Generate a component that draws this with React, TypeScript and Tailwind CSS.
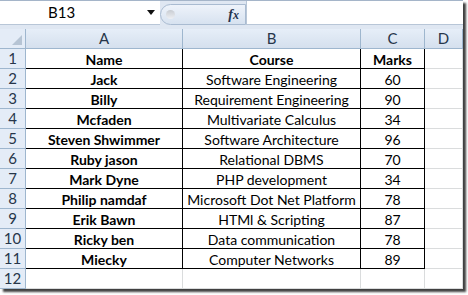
const rows = [
  { name: "Name", course: "Course", marks: "Marks", head: true },
  { name: "Jack", course: "Software Engineering", marks: "60" },
  { name: "Billy", course: "Requirement Engineering", marks: "90" },
  { name: "Mcfaden", course: "Multivariate Calculus", marks: "34" },
  { name: "Steven Shwimmer", course: "Software Architecture", marks: "96" },
  { name: "Ruby jason", course: "Relational DBMS", marks: "70" },
  { name: "Mark Dyne", course: "PHP development", marks: "34" },
  { name: "Philip namdaf", course: "Microsoft Dot Net Platform", marks: "78" },
  { name: "Erik Bawn", course: "HTMl & Scripting", marks: "87" },
  { name: "Ricky ben", course: "Data communication", marks: "78" },
  { name: "Miecky", course: "Computer Networks", marks: "89" },
]

const cols = ["A", "B", "C", "D"]

const FormulaBar = () => (
  <div className="flex h-[29px] bg-[#dfe7f2] border-t border-[#a5b5c9]">
    <div className="flex h-[24px] w-[160px] items-center bg-white border-b border-[#b8c6d7]">
      <span className="flex-1 pl-[48px] text-[15px] text-black">B13</span>
      <svg width="8" height="5" viewBox="0 0 8 5" className="mr-[5px]">
        <path d="M0 0 L8 0 L4 5 Z" fill="#111" />
      </svg>
    </div>
    <div className="mt-[3px] flex h-[21px] w-[86px] items-center rounded-l-full border border-[#a9bbd1] bg-gradient-to-b from-[#eef3fa] to-[#d7e2f0]">
      <span className="ml-[5px] h-[9px] w-[9px] rounded-full bg-gradient-to-b from-[#c8ccd2] to-[#eef0f4]" />
      <span className="ml-auto mr-[6px] font-['Liberation_Serif'] text-[14px] font-bold italic text-[#24344f]">
        f<span className="text-[12px]">x</span>
      </span>
    </div>
    <div className="h-[24px] flex-1 bg-white border-b border-l border-[#b8c6d7]" />
  </div>
)

const HeaderRow = () => (
  <>
    <div className="relative border-r border-b border-[#9eb6ce] bg-[#e4ecf7]">
      <svg width="10" height="10" viewBox="0 0 10 10" className="absolute right-[3px] bottom-[3px]">
        <path d="M10 0 L10 10 L0 10 Z" fill="#b6c4d4" />
      </svg>
    </div>
    {cols.map((c) => (
      <div
        key={c}
        className="flex items-center justify-center border-r border-b border-[#9eb6ce] bg-gradient-to-b from-[#e6eef8] to-[#d5e0ee] text-[15px] text-[#27364a]"
      >
        {c}
      </div>
    ))}
  </>
)

const RowHead = ({ n }: { n: number }) => (
  <div className="flex items-center justify-center border-r border-b border-[#9eb6ce] bg-[#e4ecf7] text-[15px] text-[#27364a]">
    {n}
  </div>
)

export default function App() {
  return (
    <div className="h-[295px] w-[468px] bg-white font-['Lato',sans-serif]">
      <div className="h-[289px] w-[463px] overflow-hidden bg-white shadow-[3px_3px_2px_rgba(0,0,0,0.75)]">
        <FormulaBar />
        <div className="grid grid-cols-[26px_157px_178px_64px_38px] grid-rows-[repeat(13,20px)]">
          <HeaderRow />
          {rows.map((r, i) => (
            <div key={i} className="contents">
              <RowHead n={i + 1} />
              <div className="flex items-center justify-center pt-px border-r border-b border-black text-[14px] font-bold text-black">
                {r.name}
              </div>
              <div className={`flex items-center justify-center pt-px border-r border-b border-black text-[14px] text-black ${r.head ? "font-bold" : ""}`}>
                {r.course}
              </div>
              <div className={`flex items-center justify-center pt-px border-r border-b border-black text-[14px] text-black ${r.head ? "font-bold" : ""}`}>
                {r.marks}
              </div>
              <div className="border-r border-b border-[#dadcdd]" />
            </div>
          ))}
          <RowHead n={12} />
          <div className="border-r border-b border-[#dadcdd]" />
          <div className="border-r border-b border-[#dadcdd]" />
          <div className="border-r border-b border-[#dadcdd]" />
          <div className="border-r border-b border-[#dadcdd]" />
        </div>
      </div>
    </div>
  )
}
